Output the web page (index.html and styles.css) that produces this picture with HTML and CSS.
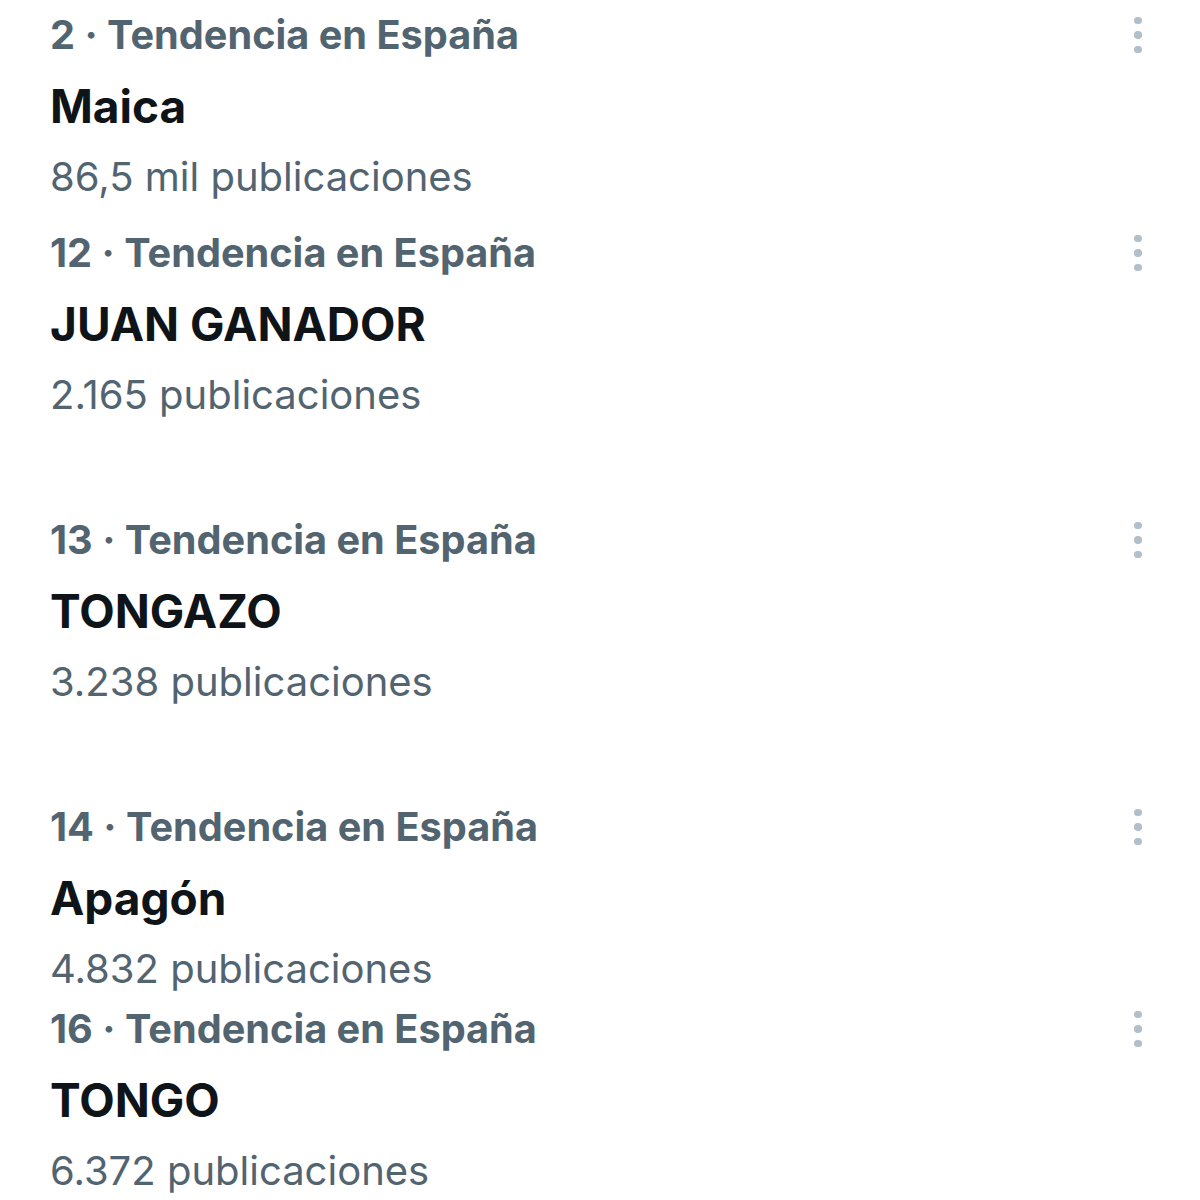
FILE: index.html
```html
<!DOCTYPE html>
<html lang="es">
<head>
  <meta charset="UTF-8">
  <title>Tendencias</title>
  <link rel="stylesheet" href="styles.css">
</head>
<body>

  <div class="trends">
    <div class="trend gap-m">
      <div class="info">
        <div class="context">2 · Tendencia en España</div>
        <div class="name">Maica</div>
        <div class="count">86,5 mil publicaciones</div>
      </div>
      <button class="more" aria-label="Más opciones"><span></span><span></span><span></span></button>
    </div>

    <div class="trend gap-l">
      <div class="info">
        <div class="context">12 · Tendencia en España</div>
        <div class="name">JUAN GANADOR</div>
        <div class="count">2.165 publicaciones</div>
      </div>
      <button class="more" aria-label="Más opciones"><span></span><span></span><span></span></button>
    </div>

    <div class="trend gap-l">
      <div class="info">
        <div class="context">13 · Tendencia en España</div>
        <div class="name">TONGAZO</div>
        <div class="count">3.238 publicaciones</div>
      </div>
      <button class="more" aria-label="Más opciones"><span></span><span></span><span></span></button>
    </div>

    <div class="trend gap-s">
      <div class="info">
        <div class="context">14 · Tendencia en España</div>
        <div class="name">Apagón</div>
        <div class="count">4.832 publicaciones</div>
      </div>
      <button class="more" aria-label="Más opciones"><span></span><span></span><span></span></button>
    </div>

    <div class="trend">
      <div class="info">
        <div class="context">16 · Tendencia en España</div>
        <div class="name">TONGO</div>
        <div class="count">6.372 publicaciones</div>
      </div>
      <button class="more" aria-label="Más opciones"><span></span><span></span><span></span></button>
    </div>
  </div>

</body>
</html>
```

FILE: styles.css
```css
body {
  margin: 0;
  background: #fff;
  font-family: Inter, Roboto, sans-serif;
}
.trends {
  padding: 6px 50px 0 50px;
}
.trend {
  display: flex;
  align-items: flex-start;
  justify-content: space-between;
}
.gap-m {
  margin-bottom: 18px;
}
.gap-l {
  margin-bottom: 87px;
}
.gap-s {
  margin-bottom: 2px;
}
.info {
  display: flex;
  flex-direction: column;
  gap: 13px;
}
.context, .name, .count {
  line-height: 58px;
  white-space: nowrap;
}
.context {
  font-size: 39.7px;
  font-weight: 700;
  color: #536471;
}
.name {
  font-size: 46px;
  font-weight: 700;
  color: #0f1419;
}
.count {
  font-size: 40px;
  color: #536471;
}
.more {
  width: 24px;
  height: 58px;
  padding: 0;
  border: none;
  background: none;
  display: flex;
  flex-direction: column;
  align-items: center;
  justify-content: center;
  gap: 7px;
}
.more span {
  width: 7.5px;
  height: 7.5px;
  border-radius: 50%;
  background: #b0bfca;
}
```
